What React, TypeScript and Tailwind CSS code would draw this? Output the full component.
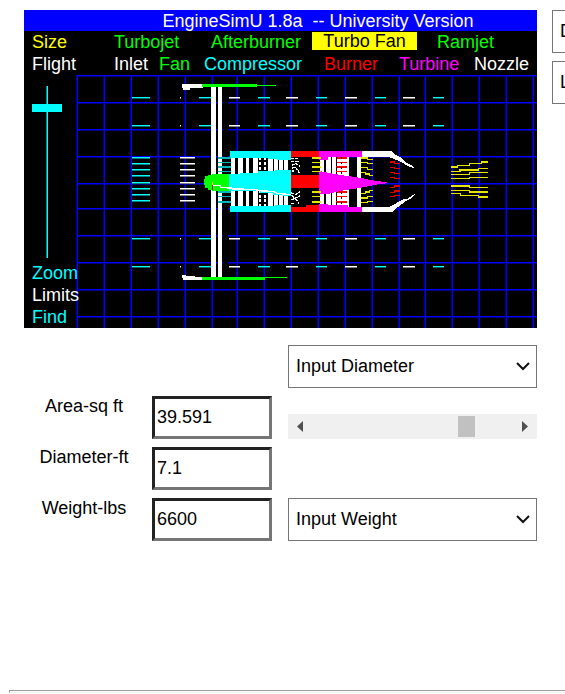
import React from "react";

const gridX = [77, 104, 131, 158, 185, 212, 237, 264, 291, 318, 345, 372, 399, 425, 452, 479, 506, 533];
const gridY = [75, 102, 129, 156, 183, 208, 235, 262, 289, 316];

const flowRows = [98, 126, 239, 267];
const cyanDashes = [[132, 18], [199, 13], [258, 12], [316, 11], [375, 11], [433, 11]];
const whiteDashes = [[180, 1], [229, 11], [286, 12], [345, 12], [403, 12]];
const inletRows = [158, 164, 170, 176, 183, 189, 195, 201];
const compressorBlades = [[124, 12], [144, 15], [167, 11], [190, 15], [235, 13], [252, 12], [268, 11], [283, 12]];
const turbineBlades = [[60, 12], [78, 14], [96, 12], [110, 38], [171, 13]];
const bladeRows = [54, 67, 81, 95, 156, 170, 186];

function EngineDrawing() {
  return (
    <svg viewBox="76 75 461 253" className="block min-w-0 flex-1" shapeRendering="crispEdges" role="img" aria-label="Turbo fan">
      <g fill="#000080">
        {gridX.map((x) => (
          <rect key={x} x={x - 1} y="75" width="1" height="253" />
        ))}
        {gridY.map((y) => (
          <rect key={y} x="77" y={y + 1} width="460" height="1" />
        ))}
      </g>
      <g fill="#0000ff">
        {gridX.map((x) => (
          <rect key={x} x={x} y="75" width="1" height="253" />
        ))}
        {gridY.map((y) => (
          <rect key={y} x="77" y={y} width="460" height="1" />
        ))}
      </g>
      <rect x="223" y="90" width="5" height="183" fill="#000" />

      {flowRows.map((y) => (
        <g key={y}>
          {cyanDashes.map(([x, w]) => (
            <g key={x} fill="#00ffff">
              <rect x={x} y={y - 1} width={w} height="1" />
              <rect x={x} y={y} width={w} height="1" opacity="0.4" />
            </g>
          ))}
          {whiteDashes.map(([x, w]) => (
            <g key={x} fill="#fff">
              <rect x={x} y={y - 1} width={w} height="1" />
              <rect x={x} y={y} width={w} height="1" opacity="0.5" />
            </g>
          ))}
        </g>
      ))}
      {inletRows.map((y) => (
        <g key={y}>
          <rect x="132" y={y - 1} width="18" height="1" fill="#00ffff" />
          <rect x="132" y={y} width="18" height="1" fill="#008080" />
          <rect x="180" y={y - 1} width="15" height="1" fill="#fff" />
          <rect x="180" y={y} width="15" height="1" fill="#808080" />
        </g>
      ))}

      <g fill="#fff">
        <rect x="211" y="86" width="5" height="191" />
        <rect x="218" y="86" width="4" height="191" />
        <path d="M182 84H203V88H190V90H183V88H182Z" />
        <path d="M182 275H186V276H195V277H203V280H183V278H182Z" />
      </g>
      <g fill="#00ff00">
        <path d="M202 84H257V85H276V86H257V87H202Z" />
        <path d="M202 277H287V278H265V280H202Z" />
      </g>

      {/* spinner, compressor and burner */}
      <g transform="translate(190 140) scale(0.33333)">
        <rect x="120" y="33" width="270" height="183" fill="#000" />
        <g fill="#fff">
          {compressorBlades.map(([x, w]) => (
            <rect key={x} x={x} y="48" width={w} height="150" />
          ))}
        </g>
        <path d="M211 52V198M226 52V198" stroke="#fff" strokeWidth="7" strokeDasharray="9 5" />
        <g fill="#00ffff">
          <path d="M119 33H303V60H260V57H235V53H119Z" />
          <path d="M118 102H150V98H204V93H255V90H303V168H280V164H250V158H210V153H118Z" />
          <path d="M119 197H255V194H303V216H119Z" />
        </g>
        <g stroke="#00b8b8" strokeWidth="4">
          {bladeRows.map((y) => (
            <line key={y} x1="83" x2="122" y1={y} y2={y} />
          ))}
        </g>
        <path d="M65 101H118V153H65V149H53V143H45V134H42V117H45V108H53V104H65Z" fill="#00ff00" />
        <path d="M66 137L90 137L92 143L126 144L128 147L190 148L215 153L250 154L260 160L303 164" fill="none" stroke="#fff" strokeWidth="4" />
        <path d="M67 136V149" stroke="#ff0000" strokeWidth="3" />
        <path d="M67 127V136" stroke="#ffff00" strokeWidth="3" />
        <g fill="#ff0000">
          <rect x="303" y="33" width="88" height="19" />
          <rect x="303" y="105" width="88" height="40" />
          <path d="M303 200H348V195H391V216H303Z" />
        </g>
        <path d="M303 56H325M303 65H328M305 77L318 70L330 80M305 86L315 80L329 99M305 93H312M303 158L318 164L330 154M304 166L315 175L329 167M305 180L315 175L327 190M303 190H312" fill="none" stroke="#fff" strokeWidth="4" strokeDasharray="10 3" />
      </g>

      {/* turbine and nozzle */}
      <g transform="translate(300 140) scale(0.33333)">
        <g fill="#fff">
          {turbineBlades.map(([x, w]) => (
            <rect key={x} x={x} y="50" width={w} height="150" />
          ))}
        </g>
        <g stroke="#ff0000" strokeWidth="4">
          {bladeRows.map((y) => (
            <line key={y} x1="108" x2="140" y1={y} y2={y} />
          ))}
        </g>
        <path d="M110 52V198M125 52V198" stroke="#000" strokeWidth="3" strokeDasharray="6 9" />
        <g fill="#ff00ff">
          <path d="M58 33H185V52H85V60H58Z" />
          <path d="M58 93L110 103L150 109L185 114L210 120L240 124L268 129L240 132L210 138L185 143L150 148L110 155L85 162H58Z" />
          <path d="M58 193H85V195H145V200H185V216H58Z" />
        </g>
        <g fill="#fff">
          <path d="M185 33H273L287 45L305 54L316 66L338 78L345 86L328 80L308 69L292 61L270 52H185Z" />
          <path d="M185 200H270L286 191L306 179L322 176L345 162L335 174L316 184L298 198L276 216H185Z" />
        </g>
        <g fill="none" stroke="#e5e500" strokeWidth="4">
          {bladeRows.map((y) => (
            <line key={y} x1="36" x2="63" y1={y} y2={y} />
          ))}
          <path d="M183 54H203V58H220M183 67H203V71H220M183 83H203V89H220M183 97H196V102H208V107H220" />
          <path d="M183 161H196V156H208V151H220M183 174H203V169H220M183 188H203V185H220" />
        </g>
        <path d="M270 66H284V71H300M270 82H284V86H300M270 97H284V101H300M270 112H284V116H300M270 142H284V138H300M270 157H284V153H300M270 169H284V166H300" fill="none" stroke="#e00000" strokeWidth="4" />
      </g>

      {/* exhaust */}
      <g transform="translate(420 110) scale(0.33333)" fill="none" stroke="#e5e500" strokeWidth="4">
        <path d="M94 171H112V166H148V161H184V156H203M94 184H120V180H175V175H203M94 193H148V188H203M94 206H148V202H203" />
        <path d="M94 228H148V233H203M94 242H148V246H203M94 251H121V256H176V261H203" />
      </g>
    </svg>
  );
}

function Choice({ label, text }: { label: string; text: string }) {
  return (
    <div className="relative">
      <select aria-label={label} className="block h-[43px] w-full appearance-none rounded-none border border-[#767676] bg-white pr-8 pb-0.5 pl-[7px] text-lg text-black">
        <option>{text}</option>
      </select>
      <svg viewBox="0 0 14 9" className="pointer-events-none absolute top-[17px] right-[7px] h-[9px] w-[14px]" aria-hidden="true">
        <path d="M1 1L7 7L13 1" fill="none" stroke="#111" strokeWidth="2" />
      </svg>
    </div>
  );
}

function Field({ id, label, value }: { id: string; label: string; value: string }) {
  return (
    <>
      <label htmlFor={id} className="h-[43px] text-center text-lg leading-5">
        {label}
      </label>
      <input
        id={id}
        defaultValue={value}
        className="mr-2 h-[43px] w-[120px] border-3 border-t-[#222] border-r-[#767676] border-b-[#767676] border-l-[#222] bg-white pl-[2px] text-lg text-black"
      />
    </>
  );
}

export default function App() {
  return (
    <div className="overflow-hidden bg-white font-['Liberation_Sans',Arial,sans-serif] text-black">
      <div className="flex gap-[15px] pt-[10px] pl-6">
        <main className="w-[513px] shrink-0">
          <section className="bg-black text-lg leading-[22px] whitespace-nowrap text-white">
            <h1 className="h-[21px] bg-[#0000ff] pl-[75px] text-center whitespace-pre">EngineSimU 1.8a  -- University Version</h1>
            <nav className="flex h-[22px] pl-2 text-left text-[#00ff00]">
              <button className="w-[82px] text-left text-[#ffff00]">Size</button>
              <button className="w-[97px] text-left">Turbojet</button>
              <button className="w-[101px] text-left">Afterburner</button>
              <button className="mt-px mb-[3px] w-[105px] bg-[#ffff00] text-center leading-[18px] text-black">Turbo Fan</button>
              <button className="ml-5 text-left">Ramjet</button>
            </nav>
            <nav className="flex h-[22px] pl-2">
              <button className="w-[82px] text-left">Flight</button>
              <button className="w-[45px] text-left">Inlet</button>
              <button className="w-[45px] text-left text-[#00ff00]">Fan</button>
              <button className="w-[120px] text-left text-[#00ffff]">Compressor</button>
              <button className="w-[75px] text-left text-[#ff0000]">Burner</button>
              <button className="w-[75px] text-left text-[#ff00ff]">Turbine</button>
              <button className="text-left">Nozzle</button>
            </nav>
            <div className="flex">
              <div className="z-10 flex w-[52px] shrink-0 flex-col items-start pt-[11px] pl-2">
                <input
                  type="range"
                  aria-label="Zoom"
                  defaultValue={11}
                  className="m-0 h-[172px] w-[30px] appearance-none bg-transparent [writing-mode:vertical-lr] [&::-webkit-slider-runnable-track]:h-full [&::-webkit-slider-runnable-track]:w-[30px] [&::-webkit-slider-runnable-track]:bg-[linear-gradient(90deg,transparent_14px,#008080_14px,#008080_15px,#00ffff_15px,#00ffff_16px,transparent_16px)] [&::-webkit-slider-thumb]:h-2 [&::-webkit-slider-thumb]:w-[30px] [&::-webkit-slider-thumb]:appearance-none [&::-webkit-slider-thumb]:bg-[#00ffff]"
                />
                <div className="flex flex-col items-start pt-1">
                  <button className="text-[#00ffff]">Zoom</button>
                  <button>Limits</button>
                  <button className="text-[#00ffff]">Find</button>
                </div>
              </div>
              <EngineDrawing />
            </div>
          </section>

          <form className="mt-[17px] grid grid-cols-[120px_128px_1fr] gap-2">
            <div className="col-start-3">
              <Choice label="Size input" text="Input Diameter" />
            </div>
            <Field id="area" label="Area-sq ft" value="39.591" />
            <div className="flex h-[25px] self-end bg-[#f0f0f0]">
              <button type="button" aria-label="Decrease" className="flex w-[19px] items-center justify-end pr-1">
                <svg viewBox="0 0 6 11" className="h-[11px] w-[6px]">
                  <path d="M6 0V11L0 5.5Z" fill="#505050" />
                </svg>
              </button>
              <input
                type="range"
                aria-label="Diameter"
                defaultValue={78}
                className="m-0 h-[25px] min-w-0 flex-1 appearance-none bg-transparent [&::-webkit-slider-thumb]:h-[21px] [&::-webkit-slider-thumb]:w-[17px] [&::-webkit-slider-thumb]:appearance-none [&::-webkit-slider-thumb]:bg-[#c1c1c1]"
              />
              <button type="button" aria-label="Increase" className="flex w-[19px] items-center pl-1">
                <svg viewBox="0 0 6 11" className="h-[11px] w-[6px]">
                  <path d="M0 0V11L6 5.5Z" fill="#505050" />
                </svg>
              </button>
            </div>
            <Field id="diameter" label="Diameter-ft" value="7.1" />
            <div />
            <Field id="weight" label="Weight-lbs" value="6600" />
            <Choice label="Weight input" text="Input Weight" />
          </form>
        </main>

        <aside className="flex w-[249px] shrink-0 flex-col gap-2">
          <Choice label="Mode" text="D" />
          <Choice label="Units" text="L" />
        </aside>
      </div>
      <hr className="mt-[149px] ml-[9px] h-[3px] border border-r-0 border-t-[#9a9a9a] border-b-[#eee] border-l-[#9a9a9a]" />
    </div>
  );
}
